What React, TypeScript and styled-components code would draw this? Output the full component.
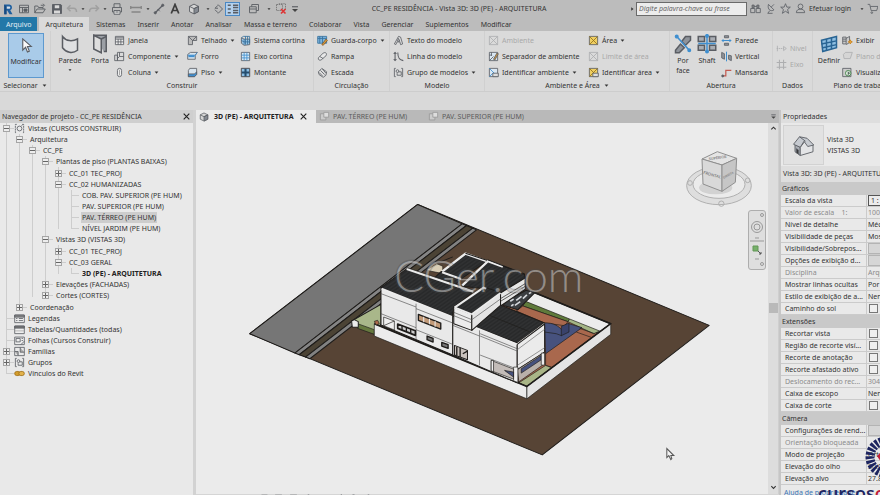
import React from "react";
import styled, { createGlobalStyle, css } from "styled-components";

const GlobalStyle = createGlobalStyle`
  * { box-sizing: border-box; }
  body { margin: 0; background: #d9d9d9; }
  body, button, input, select, table { font-family: "Noto Sans", "Open Sans", sans-serif; font-size: 7px; color: #333; }
  button { border: 0; padding: 0; background: none; cursor: default; }
  ul { list-style: none; margin: 0; padding: 0; }
  svg { display: block; flex: none; }
`;

/* ---------- icons ---------- */

const P = "#5a5d63";
const B = "#3f8fd0";

const icons: Record<string, React.ReactNode> = {
  revit: <><path d="M4 2h6a4 4 0 0 1 1 7.600L14 15h-4l-3-5H6v5H3V2z" fill="#1f5f9f" stroke="none" /><path d="M6 4.500h3.500a1.600 1.600 0 0 1 0 3.200H6z" fill="#d3dde8" stroke="none" /><path d="M3 2l3 2.500V15H3z" fill="#174a80" stroke="none" /></>,
  start: <><path d="M2 3h12v10H2zM2 6h12M6 6v7" /><path d="M8 8h4v3H8z" fill={P} /></>,
  open: <><path d="M1 13V4h4l1 2h6v2" /><path d="M1 13l3-5h11l-3 5z" /><path d="M9 3h4M12 1l2 2-2 2" /></>,
  save: <><path d="M2 2h11l1 1v11H2z" fill={P} /><path d="M5 3h6v4H5zM4 10h8v4H4z" fill="#d8d8d8" stroke="none" /></>,
  undo: <path d="M6 3L2 7l4 4M2 7h8c3 0 4 2 4 5" stroke="#a0a0a0" strokeWidth="2" />,
  redo: <path d="M10 3l4 4-4 4M14 7H6c-3 0-4 2-4 5" stroke="#a0a0a0" strokeWidth="2" />,
  print: <><path d="M4 6V1h8v5M2 6h12v6H2z" /><path d="M4 10h8v5H4z" fill="#ddd" /><path d="M6 12h4" /></>,
  measure: <path d="M1 4v4M15 4v4M1 6h14M2 12h12" stroke="#858585" strokeWidth="1.800" />,
  dim: <><path d="M3 13L13 3" strokeWidth="1.600" /><circle cx="3" cy="13" r="1.500" fill={P} /><circle cx="13" cy="3" r="1.500" fill={P} /><path d="M6 8l3 3" /></>,
  letterA: <path d="M3 14L8 2l5 12M5 10h6" stroke="#3d3d3d" strokeWidth="2.300" />,
  cube: <><path d="M8 1.500l6 3v7l-6 3-6-3v-7z" fill="#d5d5d5" /><path d="M8 7.500v7l6-3v-7z" fill="#858a92" /><path d="M2 4.500l6 3 6-3" /></>,
  section: <><path d="M8 2l6 6-6 6" /><path d="M8 3L4 7h4M8 13L4 9" /></>,
  thin: <path d="M1 3h4M1 8h4M1 13h4M8 3h7M8 6h7M8 10h7M8 13h7" strokeWidth="1.800" />,
  windows: <><path d="M2 5h9v8H2zM5 5V2h9v8h-3" /><path d="M2 8h9" /></>,
  closeHidden: <><path d="M2 2h8v8H2zM5 1h9v8" stroke="#777" strokeDasharray="2 1" /><path d="M8 8l6 6M14 8l-6 6" stroke="#d33" strokeWidth="2.200" /></>,
  more: <><path d="M4 5h8" strokeWidth="1.500" /><path d="M4 8h8l-4 4z" fill="#444" stroke="none" /></>,
  binoc: <><path d="M3 3h3v4H3zM10 3h3v4h-3zM6 5h4" fill="#888" /><path d="M1 8h6v6H1zM9 8h6v6H9z" /></>,
  dish: <path d="M5 2l8 8c-4 3-10 0-8-8zM9 6l4-4M7 11l-3 4h7" />,
  star: <path d="M8 1l2 5h5l-4 3.500 1.500 5.500L8 12l-4.500 3L5 9.500 1 6h5z" />,
  user: <><circle cx="8" cy="5" r="3.500" /><path d="M2 14c0-4 3-5 6-5s6 1 6 5z" /></>,
  cart: <><path d="M1 2h3l2 9h8l2-6H5" /><circle cx="7" cy="14" r="1.200" /></>,
  arrow: <path d="M4 1v12l3-3 2 5 2-1-2-5h4z" fill="#fafafa" />,
  wall: <path d="M2 2c3 4 8 4 12 2v9c-4 3-9 2-12-2z" fill="#dfe0e2" />,
  door: <><path d="M3 1h10v13h-2" fill="#9b9fa5" /><path d="M3 1l6 3v11l-6-3z" fill="#dedede" /><path d="M9 4l4-2" /></>,
  window: <><path d="M2 2h12v12H2z" fill="#eee" /><path d="M2 4h12M2 6h12M6 6v8M10 6v8M2 10h12" /></>,
  component: <><path d="M1 6h4v8H1zM5 2h9v12H5z" /><path d="M8 2v6h6M8 8L5 11" /></>,
  column: <><rect x="5" y="2" width="6" height="12" rx="3" fill="#eee" /><path d="M8 4v8" stroke="#999" /></>,
  roof: <><path d="M2 2h12v6H8v6H2z" fill="#bbb" /><path d="M2 2l6 6M8 8l6-6" /></>,
  ceiling: <><path d="M1 5l4-3h10l-3 4v6H1z" fill="#d8e4ee" /><path d="M1 6h11l3-4" stroke={B} /><path d="M2 6h9v3H2z" fill={B} stroke="none" /></>,
  floor: <><path d="M4 2h10v8l-3 4H2V5z" fill="#d8e4ee" /><path d="M2 10h9l3-3v4l-3 3H2z" fill={B} /></>,
  curtain: <><path d="M2 4l4 2h8v8l-8 1-4-3z" fill="#9cc6e6" /><path d="M5 2h9v10M2 4l3-2M8 2v12M11 2v12M2 8l4 2h8M6 6v8" stroke="#37719d" /></>,
  grid: <><path d="M2 2h12v12H2z" fill="#d8e9f5" /><path d="M6 2v12M10 2v12M2 6h12M2 10h12" stroke={B} /></>,
  mullion: <><path d="M2 2h12v12H2z" fill="#8cbfe4" /><path d="M8 2v12M2 8h12" stroke="#244d6e" strokeWidth="3" /><path d="M2 2h12v12H2z" /></>,
  rail: <><path d="M1 2h13v10H1z" fill="#7db4dd" stroke="#37719d" /><path d="M1 5h13M4 2v10M8 2v10" stroke="#37719d" /><path d="M7 14l6-8 2 2-6 7z" fill="#d99a3c" stroke="#8a5a20" /></>,
  ramp: <path d="M2 10l7-7c4-2 6 1 4 4l-7 6c-2 1-5 0-4-3zM4 8l5 3" fill="#e8e8e8" />,
  stair: <><path d="M2 7l5-5 7 5-1 5-4 3-6-4z" fill="#ddd" /><path d="M5 5l6 6M8 3l5 6M3 8l5 5" /></>,
  textA: <path d="M2 13L8 2l3 1 3 10-3 1-1-4H6l-2 4zM8 5L6.500 9H10z" fill="#ddd" />,
  line: <path d="M3 2v12M7 2c0 8 2 11 8 12M1 4l2-2 2 2M1 12l2 2 2-2" strokeWidth="1.500" />,
  group: <><path d="M4 2H2v12h2M12 2h2v12h-2" /><circle cx="6.500" cy="6" r="2" /><path d="M8 7h4v5H6V9" /></>,
  room: <path d="M2 2h12v12H2zM2 2l12 12M2 14L14 2" />,
  roomSep: <><path d="M2 2h12v12H2z" fill="#d9e7f3" /><path d="M2 14L8 8M2 6h4M5 2v5" /><path d="M8 12l5-9 2 1-5 9z" fill="#d99a3c" /></>,
  roomTag: <><path d="M2 2h12v12H2z" fill="#d9e7f3" /><path d="M2 2l12 12M2 14l6-6" stroke={B} /><path d="M7 9h8v5H7z" fill="#ddd" /></>,
  area: <><path d="M2 2h12v12H2z" fill="#f0cf62" /><path d="M2 2l12 12M2 14L14 2" stroke="#8f701c" /></>,
  areaTag: <><path d="M2 2h12v12H2z" fill="#f0cf62" /><path d="M2 2l12 12M2 14L14 2" stroke="#8f701c" /><path d="M7 9h8v5H7z" fill="#ddd" /></>,
  byFace: <><path d="M2 13l4-5 3 3-4 4H2zM10 2h4v3l-4 4-3-3z" fill="#8f949b" /><path d="M3 2l10 11" stroke={B} strokeWidth="1.300" /><circle cx="3" cy="2" r="1" fill={B} stroke={B} /><circle cx="13" cy="13" r="1" fill={B} stroke={B} /></>,
  shaft: <><path d="M1 2h5v4H1zM10 2h5v4h-5zM1 9h5v4H1zM10 9h5v4h-5z" fill="#a9adb3" /><path d="M8 1v14M1 7.500h14" stroke={B} /><circle cx="8" cy="1.500" r="1" fill={B} stroke={B} /><circle cx="8" cy="14" r="1" fill={B} stroke={B} /></>,
  opWall: <><path d="M5 1h6v3H5zM5 12h6v3H5z" fill="#8f949b" /><path d="M1 8h14M3 6v4M13 6v4" stroke={B} strokeWidth="1.500" /></>,
  opVert: <><path d="M1 2l4 2v8l-4-2zM11 6l4 1v7l-4-2z" fill="#8f949b" /><path d="M8 1v14" stroke={B} strokeWidth="1.500" /></>,
  dormer: <><path d="M2 13h5V5h8" stroke="#c25a50" strokeWidth="1.800" /><circle cx="2.500" cy="13" r="1.500" fill={P} /></>,
  level: <><path d="M1 8h10" strokeDasharray="2 1" /><path d="M11 5l4 3-4 3zM2 4v8" /></>,
  axis: <path d="M1 5h14M1 12h14M5 1v14M11 1v14" strokeWidth="1.500" />,
  setPlane: <><path d="M2 5l12-3v9L3 14z" fill="#8fbfe2" stroke="#2a6594" /><path d="M6 4v9.200M10 3v9.200M2 8l12-2.500M3 11l11-2.500" stroke="#2a6594" /></>,
  show: <><path d="M1 3h5v10H1zM6 5l5-3v9l-5 3M1 6h5M1 9h5" fill="#ccc" /><path d="M12 7l1 2 2 1-2 1-1 2-1-2-2-1 2-1z" fill="#e9a83c" stroke="#c77f18" /></>,
  refPlane: <path d="M2 5l3-3h10l-3 9H3z" fill="#ccc" />,
  viewer: <><path d="M1 2h12v12H1z" fill="#ccc" /><circle cx="9" cy="9" r="4" fill="#dfeee0" stroke="#3b7c42" /><path d="M9 7l2 2-2 2z" fill="#3b7c42" /></>,
  views: <><path d="M4 2H2v12h2M12 2h2v12h-2" strokeDasharray="3 1" /><circle cx="8" cy="8" r="3.500" /><path d="M11 4l2-2" /></>,
  legend: <><path d="M1 3h14v11H1z" fill="#eee" /><path d="M1 3h14v3H1z" fill="#888" /><path d="M3 8h2M3 11h2M7 8h6M7 11h6" /></>,
  schedule: <><path d="M1 3h14v11H1z" fill="#eee" /><path d="M1 3h14v3H1z" fill="#777" /><path d="M1 10h14" stroke="#aaa" /></>,
  sheet: <><path d="M1 3h14v11H1z" fill="#eee" /><path d="M3 5h6v5H3zM11 5h2M11 8h2M10 14l5-5" /></>,
  family: <><path d="M1 2h14v12H1z" /><path d="M1 8h5v6M9 2v7h6" fill="#aaa" /></>,
  link: <><rect x="1" y="5" width="8" height="6" rx="3" fill="#d39c2c" stroke="#a06f12" /><rect x="7" y="5" width="8" height="6" rx="3" fill="#e2b24c" stroke="#a06f12" /></>,
  plan: <><path d="M2 4h8v9H2z" fill="#ccc" stroke="#999" /><path d="M7 2h7v7H7z" fill="#ddd" stroke="#999" /></>,
  house: <g strokeWidth="0.600"><path d="M2 7.500l3.500 2V15L2 12.500z" fill="#a9adb4" /><path d="M5.500 9.500L9 5l5 3v4.500L5.500 15z" fill="#e3e4e6" /><path d="M1 7.500L5 2.500l5 1 4.500 4.500-4 1L8 5.500l-2.500 4z" fill="#c6cad0" /><path d="M5 2.500l4 3" /><path d="M3 10.500l1.200.8v2.700L3 13.200z" fill="#333" /></g>,
  close: <path d="M3 3l10 10M13 3L3 13" stroke="#222" strokeWidth="2" />,
  chevUp: <path d="M3 10l5-5 5 5" stroke="#333" strokeWidth="2.500" />,
  chevDown: <path d="M3 5l5 5 5-5" stroke="#333" strokeWidth="2.500" />,
  right: <path d="M5 1l9 7-9 7z" fill="#333" stroke="none" />,
  down: <path d="M2 5h12l-6 7z" fill="#333" stroke="none" />,
};

const Icon = ({ n, s = 11 }: { n: string; s?: number }) => (
  <svg width={s} height={s} viewBox="0 0 16 16" fill="none" stroke={P} strokeWidth="1.200" aria-hidden="true">
    {icons[n]}
  </svg>
);

/* ---------- frame ---------- */

const Page = styled.div`
  position: relative;
  display: flex;
  flex-direction: column;
  height: 100vh;
  overflow: hidden;
  line-height: 11px;
  white-space: nowrap;
`;

const TitleBar = styled.header`
  display: grid;
  grid-template-columns: 293px 1fr 250px;
  align-items: center;
  height: 17px;
  background: #bcbcbc;
`;

const QuickTools = styled.div`
  display: flex;
  align-items: center;
`;

const QuickButton = styled.button<{ $w: number; $on?: boolean }>`
  display: flex;
  align-items: center;
  justify-content: center;
  flex: none;
  width: ${(p) => p.$w}px;
  height: 14px;
  ${(p) => p.$on && css`background: #b3d0ec; box-shadow: inset 0 0 0 1px #4a88c4;`}
`;

const WindowTitle = styled.h1`
  margin: 0;
  padding-right: 5px;
  font-size: 7px;
  font-weight: 400;
  line-height: 13px;
  text-align: center;
`;

const Account = styled.div`
  display: flex;
  align-items: center;
  overflow: hidden;
`;

const Search = styled.input`
  width: 115px;
  height: 14px;
  margin: 0 1px 0 2px;
  padding: 0 2px;
  border: 1px solid #6a6a6a;
  border-radius: 0;
  background: #ececec;
  font-style: italic;
  &::placeholder { color: #666; opacity: 1; }
`;

const Login = styled.button`
  width: 53px;
  text-align: left;
`;

const Tabs = styled.nav`
  display: flex;
  align-items: stretch;
  height: 14px;
  background: #bcbcbc;
`;

const Tab = styled.button<{ $kind?: "file" | "active" }>`
  padding: 0 6px;
  line-height: 13px;
  ${(p) => p.$kind === "file" && css`margin-right: 2px; background: #2378a8; color: #e4eef4;`}
  ${(p) => p.$kind === "active" && css`margin-right: 1px; background: #dadada;`}
`;

/* ---------- ribbon ---------- */

const RibbonBar = styled.section`
  display: flex;
  height: 61px;
  flex: none;
  background: #dadada;
  border-bottom: 1px solid #cdcdcd;
  overflow: hidden;
`;

const Group = styled.div<{ $w: number }>`
  display: flex;
  flex-direction: column;
  flex: none;
  width: ${(p) => p.$w}px;
  border-right: 1px solid #d0d0d0;
`;

const GroupBody = styled.div`
  display: flex;
  height: 49px;
  padding: 2px 0 0 3px;
`;

const Caption = styled.div`
  display: flex;
  align-items: center;
  justify-content: center;
  gap: 4px;
`;

const Stack = styled.div<{ $w: number; $low?: boolean }>`
  display: flex;
  flex-direction: column;
  flex: none;
  width: ${(p) => p.$w}px;
  padding-top: ${(p) => (p.$low ? 7 : 0)}px;
`;

const Tool = styled.button<{ $off?: boolean }>`
  display: flex;
  align-items: center;
  gap: 3px;
  height: 16px;
  ${(p) => p.$off && css`color: #a9a9a9; svg { opacity: 0.35; }`}
`;

const BigTool = styled.button<{ $w: number; $on?: boolean }>`
  display: flex;
  flex-direction: column;
  align-items: center;
  gap: 2px;
  flex: none;
  width: ${(p) => p.$w}px;
  height: 45px;
  padding-top: 1px;
  line-height: 10px;
  ${(p) => p.$on && css`margin-left: 5px; padding-top: 5px; gap: 4px; background: #a9cbe9; box-shadow: inset 0 0 0 1px #5d99cf;`}
`;

type Item = [icon: string, label: string, menu?: boolean, off?: boolean];

const ToolStack = ({ w, items, low }: { w: number; items: Item[]; low?: boolean }) => (
  <Stack $w={w} $low={low}>
    {items.map(([icon, label, menu, off]) => (
      <Tool key={label} $off={off} disabled={off}>
        <Icon n={icon} />
        {label}
        {menu && <Icon n="down" s={5} />}
      </Tool>
    ))}
  </Stack>
);

const Ribbon = () => (
  <RibbonBar aria-label="Arquitetura">
    <Group $w={51}>
      <GroupBody>
        <BigTool $w={36} $on><Icon n="arrow" s={15} />Modificar</BigTool>
      </GroupBody>
      <Caption>Selecionar <Icon n="down" s={5} /></Caption>
    </Group>
    <Group $w={263}>
      <GroupBody>
        <BigTool $w={32}><Icon n="wall" s={20} />Parede<Icon n="down" s={4} /></BigTool>
        <BigTool $w={28}><Icon n="door" s={20} />Porta</BigTool>
        <ToolStack w={73} items={[["window", "Janela"], ["component", "Componente", true], ["column", "Coluna", true]]} />
        <ToolStack w={53} items={[["roof", "Telhado", true], ["ceiling", "Forro"], ["floor", "Piso", true]]} />
        <ToolStack w={70} items={[["curtain", "Sistema cortina"], ["grid", "Eixo cortina"], ["mullion", "Montante"]]} />
      </GroupBody>
      <Caption>Construir</Caption>
    </Group>
    <Group $w={76}>
      <GroupBody>
        <ToolStack w={70} items={[["rail", "Guarda-corpo", true], ["ramp", "Rampa"], ["stair", "Escada"]]} />
      </GroupBody>
      <Caption>Circulação</Caption>
    </Group>
    <Group $w={95}>
      <GroupBody>
        <ToolStack w={90} items={[["textA", "Texto do modelo"], ["line", "Linha do modelo"], ["group", "Grupo de modelos", true]]} />
      </GroupBody>
      <Caption>Modelo</Caption>
    </Group>
    <Group $w={185}>
      <GroupBody>
        <ToolStack w={100} items={[["room", "Ambiente", false, true], ["roomSep", "Separador de ambiente"], ["roomTag", "Identificar ambiente", true]]} />
        <ToolStack w={80} items={[["area", "Área", true], ["room", "Limite de área", false, true], ["areaTag", "Identificar área", true]]} />
      </GroupBody>
      <Caption>Ambiente e Área <Icon n="down" s={5} /></Caption>
    </Group>
    <Group $w={103}>
      <GroupBody>
        <BigTool $w={20}><Icon n="byFace" s={20} />Por<br />face</BigTool>
        <BigTool $w={28}><Icon n="shaft" s={20} />Shaft</BigTool>
        <ToolStack w={50} items={[["opWall", "Parede"], ["opVert", "Vertical"], ["dormer", "Mansarda"]]} />
      </GroupBody>
      <Caption>Abertura</Caption>
    </Group>
    <Group $w={40}>
      <GroupBody>
        <ToolStack w={36} low items={[["level", "Nível", false, true], ["axis", "Eixo", false, true]]} />
      </GroupBody>
      <Caption>Dados</Caption>
    </Group>
    <Group $w={100}>
      <GroupBody>
        <BigTool $w={26}><Icon n="setPlane" s={20} />Definir</BigTool>
        <ToolStack w={70} items={[["show", "Exibir"], ["refPlane", "Plano de referência", false, true], ["viewer", "Visualizador"]]} />
      </GroupBody>
      <Caption>Plano de trabalho</Caption>
    </Group>
  </RibbonBar>
);

/* ---------- project browser ---------- */

const OptionsBar = styled.div`
  flex: none;
  height: 18px;
  background: #d9d9d9;
`;

const Workspace = styled.main`
  display: grid;
  grid-template-columns: 196px minmax(0, 1fr) 101px;
  flex: 1;
  min-height: 0;
`;

const Browser = styled.aside`
  background: #e9e9e9;
  border-right: 3px solid #d2d2d2;
  overflow: hidden;
`;

const PanelHeader = styled.div`
  display: flex;
  align-items: center;
  justify-content: space-between;
  height: 13px;
  padding: 0 1px 0 2px;
  background: #cfcfcf;
`;

const IconButton = styled.button`
  display: flex;
  padding: 1px;
`;

const Branch = styled.ul`
  background: linear-gradient(#cdcdcd, #cdcdcd) 6px 0 / 1px calc(100% - 5px) no-repeat;
  & & { margin-left: 13px; }
  & & & & { padding-bottom: 1px; }
  & & & & & { padding: 1px 0 0; }
  & & & & & & { padding: 0; }
`;

const Row = styled.div`
  display: flex;
  align-items: center;
  height: 11px;
  padding-left: 3px;
`;

const Expander = styled.button`
  display: grid;
  place-items: center;
  flex: none;
  width: 7px;
  height: 7px;
  border: 1px solid #a5a5a5;
  background: #ededed;
`;

const Dash = styled.span<{ $w: number }>`
  flex: none;
  width: ${(p) => p.$w}px;
  height: 1px;
  background: #cdcdcd;
`;

const LeafLine = styled(Dash)`
  margin-left: 3px;
`;

const NodeName = styled.span<{ $selected?: boolean; $bold?: boolean }>`
  padding: 0 1px;
  margin-left: 2px;
  ${(p) => p.$selected && css`background: #cdcdcd;`}
  ${(p) => p.$bold && css`font-weight: 700; color: #222;`}
`;

type Node = { t: string; icon?: string; kids?: Node[]; closed?: boolean; sel?: boolean; bold?: boolean };

const tree: Node[] = [
  {
    t: "Vistas (CURSOS CONSTRUIR)", icon: "views", kids: [
      {
        t: "Arquitetura", kids: [
          {
            t: "CC_PE", kids: [
              {
                t: "Plantas de piso (PLANTAS BAIXAS)", kids: [
                  { t: "CC_01 TEC_PROJ", closed: true },
                  {
                    t: "CC_02 HUMANIZADAS", kids: [
                      { t: "COB. PAV. SUPERIOR (PE HUM)" },
                      { t: "PAV. SUPERIOR (PE HUM)" },
                      { t: "PAV. TÉRREO (PE HUM)", sel: true },
                      { t: "NÍVEL JARDIM (PE HUM)" },
                    ],
                  },
                ],
              },
              {
                t: "Vistas 3D (VISTAS 3D)", kids: [
                  { t: "CC_01 TEC_PROJ", closed: true },
                  { t: "CC_03 GERAL", kids: [{ t: "3D (PE) - ARQUITETURA", bold: true }] },
                ],
              },
              { t: "Elevações (FACHADAS)", closed: true },
              { t: "Cortes (CORTES)", closed: true },
            ],
          },
        ],
      },
      { t: "Coordenação", closed: true },
    ],
  },
  { t: "Legendas", icon: "legend" },
  { t: "Tabelas/Quantidades (todas)", icon: "schedule" },
  { t: "Folhas (Cursos Construir)", icon: "sheet" },
  { t: "Famílias", icon: "family", closed: true },
  { t: "Grupos", icon: "group", closed: true },
  { t: "Vínculos do Revit", icon: "link" },
];

const TreeList = ({ nodes }: { nodes: Node[] }) => (
  <Branch>
    {nodes.map((n) => (
      <li key={n.t}>
        <Row>
          {n.kids || n.closed ? (
            <Expander aria-label={(n.closed ? "Expandir " : "Recolher ") + n.t}>
              <svg width="5" height="5" viewBox="0 0 5 5" stroke="#666">
                <path d={n.closed ? "M0 2.500h5M2.500 0v5" : "M0 2.500h5"} />
              </svg>
            </Expander>
          ) : (
            <LeafLine $w={4} />
          )}
          <Dash $w={4} />
          {n.icon && <Icon n={n.icon} s={11} />}
          <NodeName $selected={n.sel} $bold={n.bold}>{n.t}</NodeName>
        </Row>
        {n.kids && <TreeList nodes={n.kids} />}
      </li>
    ))}
  </Branch>
);

/* ---------- drawing area ---------- */

const ViewArea = styled.section`
  display: flex;
  flex-direction: column;
  min-width: 0;
`;

const ViewTabs = styled.div`
  display: flex;
  height: 13px;
  flex: none;
  background: #b9b9b9;
`;

const ViewTab = styled.button<{ $on?: boolean }>`
  display: flex;
  align-items: center;
  gap: 3px;
  width: ${(p) => (p.$on ? 120 : 109)}px;
  padding: 0 3px;
  color: #5c5c5c;
  ${(p) => p.$on && css`gap: 5px; background: #ebebeb; color: #222; font-weight: 700;`}
`;

const TabMenu = styled(IconButton)`
  margin-left: auto;
  align-self: center;
`;

const ViewRow = styled.div`
  display: flex;
  flex: 1;
  min-height: 0;
`;

const Canvas = styled.div`
  position: relative;
  flex: 1;
  min-width: 0;
  overflow: hidden;
  background: #ebebeb;
`;

const SceneSvg = styled.svg`
  width: 100%;
  height: 100%;
`;

const CubeOverlay = styled.div`
  position: absolute;
  top: 26px;
  right: 13px;
`;

const NavBar = styled.div`
  position: absolute;
  top: 87px;
  right: 2px;
  display: flex;
  flex-direction: column;
  align-items: center;
  justify-content: space-between;
  width: 18px;
  height: 60px;
  padding: 2px 0;
  border: 1px solid #adadad;
  border-radius: 3px;
  background: #dedede;
`;

const Scrollbar = styled.div`
  display: flex;
  flex-direction: column;
  align-items: center;
  justify-content: space-between;
  width: 11px;
  padding: 2px 0 3px;
  background: #dddddd;
  border-right: 1px solid #cfcfcf;
`;

const Thumb = styled.div`
  width: 9px;
  height: 10px;
  background: #b9b9b9;
`;

const ViewControls = styled.div`
  display: flex;
  align-items: flex-start;
  gap: 6px;
  flex: none;
  height: 2px;
  padding-left: 48px;
  overflow: hidden;
  background: #d5d5d5;
`;

const Scene = () => (
  <SceneSvg viewBox="197 123 571 370" role="img" aria-label="Vista 3D da residência">
    <defs>
      <pattern id="tiles" width="9" height="9" patternUnits="userSpaceOnUse" patternTransform="rotate(-35)">
        <rect width="9" height="9" fill="#292a2b" />
        <path d="M0 4.500h9" stroke="#383939" strokeWidth="2" />
      </pattern>
    </defs>
    <g transform="translate(240 190) scale(0.33333)" stroke="#1e1c1a" strokeWidth="3" strokeLinejoin="round">
      <path d="M535 43L1408 405L908 793L32 430z" fill="#574435" />
      <path d="M535 43L668 101L167 488L32 430z" fill="#767676" />
      <path d="M668 101L681 106L180 493L167 488z" fill="#858585" />
      <path d="M681 106L700 114L199 500L180 493z" fill="#4b4335" />
      <path d="M700 114L711 119L212 505L199 500z" fill="#828282" />

      <path d="M425 342L337 392L405 430L425 400z" fill="#a9b78a" />
      <path d="M355 400L405 418V432L355 414z" fill="#66793f" strokeWidth="2" />
      <path d="M337 392L345 388L357 394V411L339 410z" fill="#ececec" />
      <path d="M560 240L592 220L610 228V250z" fill="#d9cdb5" strokeWidth="2" />
      <path d="M592 220L640 200" fill="none" />

      <path d="M880 305L1113 400L862 588L700 500L750 340z" fill="#a9684d" />
      <path d="M880 305L1113 400L1075 428L850 332z" fill="#ececec" />
      <path d="M858 333L990 386L985 394L850 347z" fill="#5f7a3b" strokeWidth="2" />
      <path d="M990 386L1080 422L1062 430L985 394z" fill="#a4b585" strokeWidth="2" />
      <path d="M850 347L985 394L975 406L915 398L830 362z" fill="#a9684d" strokeWidth="2" />
      <path d="M915 398C940 396 958 408 966 418L988 400L1027 412L918 490z" fill="#47527e" strokeWidth="2" />
      <path d="M965 408V436L988 425V398z" fill="#39426b" strokeWidth="2" />
      <path d="M915 425L950 430L966 436" fill="none" strokeWidth="2" />
      <path d="M1010 425L1055 441M1020 414L1065 430" fill="none" strokeWidth="2" />
      <path d="M918 490L918 525L936 530" fill="none" strokeWidth="2" />
      <path d="M918 525L936 532L862 588L838 577z" fill="#a9b587" strokeWidth="2" />

      <path d="M405 400L862 588V625L405 437z" fill="#ececec" strokeWidth="2" />
      <path d="M862 588L1113 400V432L862 625z" fill="#e4e4e4" strokeWidth="2" />
      <path d="M405 400L862 588L1113 400L880 305" fill="none" strokeWidth="5" />

      <path d="M803 330L860 300L885 308L835 358L790 345z" fill="#3a3d40" />
      <path d="M812 333L822 326M830 330L846 318M826 345L842 334M850 325L862 314M815 347L822 342M868 310L875 306" stroke="#d5d8dc" strokeWidth="5" />

      <path d="M678 190L742 213L665 266L608 244z" fill="url(#tiles)" />
      <path d="M608 244L678 190L742 213" fill="none" stroke="#ececec" strokeWidth="7" />
      <path d="M678 189L744 211" fill="none" />
      <path d="M605 244L665 264L640 292L580 268z" fill="url(#tiles)" />
      <path d="M608 246L665 266" fill="none" stroke="#ececec" strokeWidth="6" />
      <path d="M783 305L857 260V297L783 347z" fill="#e6e6e6" />
      <path d="M783 325L857 280M783 333L857 288" strokeWidth="2" />
      <path d="M745 210L855 252V264L783 308L730 295L668 288z" fill="url(#tiles)" />
      <path d="M668 286L745 213L790 229" fill="none" stroke="#ececec" strokeWidth="7" />
      <path d="M745 209L855 251" fill="none" />

      <path d="M425 292L640 377V494L425 404z" fill="#e9e9e9" />
      <path d="M502 236L702 304L645 350L638 377L425 292z" fill="url(#tiles)" />
      <path d="M502 236L702 304" fill="none" stroke="#ececec" strokeWidth="7" />
      <path d="M502 232L704 300" fill="none" strokeWidth="2" />
      <path d="M427 295L638 379" fill="none" stroke="#ececec" strokeWidth="5" />
      <path d="M425 310L530 350M530 355L640 398M425 370L530 412M530 418L640 462M530 340V447" fill="none" stroke="#555" strokeWidth="2" />

      <path d="M640 378L833 458V577L640 494z" fill="#e9e9e9" />
      <path d="M780 343L915 398L833 458L700 406z" fill="url(#tiles)" />
      <path d="M700 409L833 462L915 401" fill="none" stroke="#ececec" strokeWidth="6" />
      <path d="M745 373L870 424" fill="none" strokeWidth="2" />
      <path d="M833 462L915 401V485L833 538z" fill="#ebebeb" />
      <path d="M833 478L915 417M833 525L915 472" fill="none" stroke="#666" strokeWidth="2" />
      <path d="M833 538L915 485V520L838 574z" fill="#b9b1ab" strokeWidth="2" />
      <path d="M845 535L905 495V508L845 548z" fill="#47527e" strokeWidth="2" />
      <path d="M905 488H915V524H905z" fill="#ececec" strokeWidth="2" />
      <path d="M822 530H835V576L822 571z" fill="#f0f0f0" strokeWidth="2" />
      <path d="M640 405L720 437M720 420V525M722 430L833 475M722 494L822 532M722 437L833 482" fill="none" stroke="#555" strokeWidth="2" />
      <path d="M755 510L822 536V566L755 541z" fill="#c3bcb8" strokeWidth="2" />
      <path d="M755 510H762V544L755 541z" fill="#eee" strokeWidth="2" />
      <path d="M795 540L822 545V560z" fill="#47527e" strokeWidth="2" />

      <path d="M643 350L697 372V420L643 400z" fill="#ececec" />
      <path d="M697 372L783 308V345L697 420z" fill="#e4e4e4" />
      <path d="M643 350L732 290L783 306L697 372z" fill="url(#tiles)" />
      <path d="M645 352L732 292L740 295M697 372L783 308M645 351L697 372" fill="none" stroke="#ececec" strokeWidth="6" />
      <path d="M643 366L697 388L783 326M643 376L697 398" fill="none" stroke="#555" strokeWidth="2" />

      <path d="M537 372L604 398V416L537 390z" fill="#c29a78" strokeWidth="4" />
      <path d="M553 379V396M570 385V402M587 392V409" stroke="#eee" />
      <path d="M475 401L528 421V435L475 414z" fill="#ccc" strokeWidth="5" />
      <path d="M488 406V420M501 411V425M514 416V430" strokeWidth="4" />
      <path d="M433 380L465 392V419L433 406zM433 406L465 392" fill="#efefef" strokeWidth="2" />
      <path d="M563 437L581 444V455L563 448zM607 456L626 463V474L607 467z" fill="#777" strokeWidth="4" />
      <path d="M645 465L684 480V508L645 494z" fill="#c9c2bd" strokeWidth="3" />
      <path d="M652 469V495M662 472V500M670 490L684 482" strokeWidth="4" />
      <path d="M405 393L415 390L420 400L410 404z" fill="#ad6b4d" strokeWidth="2" />
    </g>
    <text x="395" y="292" fontFamily="Lato" fontWeight="300" fontSize="44" fill="#e8e8e8" fillOpacity="0.45" stroke="#4a4a4a" strokeOpacity="0.3" strokeWidth="3" paintOrder="stroke">CGer.com</text>
    <path d="M667 448v9l2-2 2 4 1-1-1-3h3z" fill="#f4f4f4" stroke="#555" />
  </SceneSvg>
);

const ViewCube = () => (
  <svg width="70" height="58" viewBox="20 130 210 174" fill="none" stroke="#b0b0b0" strokeWidth="3" role="img" aria-label="ViewCube">
    <ellipse cx="122" cy="240" rx="97" ry="57" fill="#dedede" />
    <ellipse cx="122" cy="236" rx="78" ry="42" fill="#ebebeb" />
    <ellipse cx="112" cy="246" rx="50" ry="20" fill="#d2d2d2" stroke="none" />
    <circle cx="35" cy="232" r="7" /><circle cx="208" cy="224" r="7" /><circle cx="129" cy="294" r="8" />
    <g stroke="#8f8f8f">
      <path d="M117 138L175 158L131 178L71 160z" fill="#e4e4e4" />
      <path d="M71 160L131 178V257L74 235z" fill="#d9d9d9" />
      <path d="M131 178L175 158L171 230L131 257z" fill="#c6c6c6" />
    </g>
    <g fill="#808080" stroke="none" fontFamily="Lato" fontWeight="700">
      <text x="74" y="204" fontSize="12" transform="rotate(16 74 204)">FRONTAL</text>
      <text x="92" y="164" fontSize="11" transform="rotate(-8 92 164)">SUPERIOR</text>
      <text x="136" y="219" fontSize="9" transform="rotate(-28 136 219)">DIREITA</text>
    </g>
  </svg>
);

/* ---------- properties ---------- */

const Properties = styled.aside`
  overflow: hidden;
  background: #e9e9e9;
  border-left: 2px solid #c6c6c6;
`;

const PropsTitle = styled(PanelHeader)`
  background: #dedede;
`;

const TypeBox = styled.div`
  display: flex;
  align-items: center;
  gap: 3px;
  height: 43px;
  padding: 1px 0 1px 2px;
`;

const Preview = styled.div`
  display: grid;
  place-items: center;
  width: 41px;
  height: 40px;
  border: 1px solid #d2d2d2;
  background: #e2e2e2;
`;

const Instance = styled.div`
  height: 16px;
  padding: 0 2px;
  line-height: 16px;
  background: #dedede;
`;

const PropTable = styled.table`
  width: 160px;
  table-layout: fixed;
  border-collapse: separate;
  border-spacing: 0;
  th, td { font-weight: 400; text-align: left; padding: 0; overflow: hidden; }
`;

const Section = styled.th`
  height: 13px;
  background: #c9c9c9;
  line-height: 12px;
  && { padding-left: 1px; }
`;

const PropName = styled.th<{ $off?: boolean }>`
  height: 12px;
  border-bottom: 1px solid #cbcbcb;
  border-right: 1px solid #cbcbcb;
  white-space: pre;
  && { padding-left: 4px; }
  color: ${(p) => (p.$off ? "#8b8b8b" : "#333")};
`;

const PropValue = styled.td<{ $off?: boolean }>`
  height: 12px;
  border-bottom: 1px solid #cbcbcb;
  && { padding-left: 1px; }
  color: ${(p) => (p.$off ? "#8b8b8b" : "#333")};
`;

const Check = styled.input`
  appearance: none;
  display: block;
  width: 9px;
  height: 9px;
  margin: 1px;
  border: 1px solid #777;
  background: #efefef;
`;

const Scale = styled.input`
  display: block;
  width: 70px;
  height: 11px;
  padding: 0 2px;
  border: 1px solid #555;
  background: #ececec;
`;

const EditButton = styled.button`
  display: block;
  width: 70px;
  height: 11px;
  border: 1px solid #b4b4b4;
  background: #d6d6d6;
`;

const HelpLink = styled.a`
  display: block;
  padding: 2px 3px;
  color: #3c74b4;
`;

type Prop = [name: string, value?: string, off?: boolean];
const sections: [string, Prop[]][] = [
  ["Gráficos", [
    ["Escala da vista", "scale"], ["Valor de escala    1:", "100", true], ["Nível de detalhe", "Médio"],
    ["Visibilidade de peças", "Mostrar original"], ["Visibilidade/Sobrepos...", "edit"], ["Opções de exibição d...", "edit"],
    ["Disciplina", "Arquitetura", true], ["Mostrar linhas ocultas", "Por disciplina"], ["Estilo de exibição de a...", "Nenhum"], ["Caminho do sol"],
  ]],
  ["Extensões", [
    ["Recortar vista"], ["Região de recorte visí..."], ["Recorte de anotação"], ["Recorte afastado ativo"],
    ["Deslocamento do rec...", "304.8000", true], ["Caixa de escopo", "Nenhum"], ["Caixa de corte"],
  ]],
  ["Câmera", [
    ["Configurações de rend...", "edit"], ["Orientação bloqueada", " ", true], ["Modo de projeção", "Ortogonal"],
    ["Elevação do olho", "30.0000"], ["Elevação alvo", "27.8500"],
  ]],
];

const Value = ({ name, value }: { name: string; value?: string }) => {
  if (!value) return <Check type="checkbox" aria-label={name} />;
  if (value === "scale") return <Scale aria-label={name} defaultValue="1 : 100" />;
  if (value === "edit") return <EditButton aria-label={name} />;
  return <>{value}</>;
};

/* ---------- brand mark ---------- */

const Brand = styled.div`
  position: absolute;
  right: 0;
  bottom: 0;
  width: 62px;
  height: 62px;
  overflow: hidden;
`;

const BrandMark = () => (
  <Brand>
    <svg width="62" height="62" viewBox="818 433 62 62" role="img" aria-label="Cursos Construir">
      <circle cx="886" cy="457" r="16" fill="none" stroke="#1d2560" strokeWidth="9" strokeDasharray="2.600 1.400" />
      <path d="M877 456l4-4v10z" fill="#c02038" />
      <text x="818" y="500" fontFamily="Open Sans" fontSize="18" fontWeight="600" fill="#1d2560">cursos<tspan fill="#c02038">c</tspan></text>
    </svg>
  </Brand>
);

const quick: [string, number, string][] = [
  ["revit", 16, "Revit"], ["start", 15, "Início"], ["open", 18, "Abrir"], ["save", 15, "Salvar"], ["undo", 15, "Desfazer"], ["down", 7, "Lista desfazer"],
  ["redo", 15, "Refazer"], ["down", 7, "Lista refazer"], ["print", 18, "Imprimir"], ["measure", 19, "Medir"], ["down", 6, "Lista medir"], ["dim", 16, "Cota"],
  ["letterA", 15, "Texto"], ["cube", 24, "Vista 3D"], ["down", 4, "Lista vista"], ["section", 15, "Corte"], ["thin", 15, "Linhas finas"],
  ["windows", 27, "Alternar janelas"], ["down", 4, "Lista janelas"], ["closeHidden", 19, "Fechar inativas"], ["more", 10, "Personalizar"],
];

const tabNames = ["Sistemas", "Inserir", "Anotar", "Analisar", "Massa e terreno", "Colaborar", "Vista", "Gerenciar", "Suplementos", "Modificar"];

export default function App() {
  return (
    <Page>
      <GlobalStyle />
      <TitleBar>
        <QuickTools>
          {quick.map(([icon, w, label]) => (
            <QuickButton key={label} $w={w} $on={icon === "thin"} aria-label={label}>
              <Icon n={icon} s={icon === "down" ? 4 : 12} />
            </QuickButton>
          ))}
        </QuickTools>
        <WindowTitle>CC_PE RESIDÊNCIA - Vista 3D: 3D (PE) - ARQUITETURA</WindowTitle>
        <Account>
          <Icon n="right" s={4} />
          <Search placeholder="Digite palavra-chave ou frase" aria-label="Pesquisar" />
          <QuickButton $w={15} aria-label="Procurar"><Icon n="binoc" /></QuickButton>
          <QuickButton $w={15} aria-label="Comunicação"><Icon n="dish" /></QuickButton>
          <QuickButton $w={15} aria-label="Favoritos"><Icon n="star" /></QuickButton>
          <QuickButton $w={16} aria-label="Usuário"><Icon n="user" /></QuickButton>
          <Login>Efetuar login</Login>
          <Icon n="down" s={4} />
          <QuickButton $w={16} aria-label="Loja"><Icon n="cart" /></QuickButton>
        </Account>
      </TitleBar>
      <Tabs>
        <Tab $kind="file">Arquivo</Tab>
        <Tab $kind="active">Arquitetura</Tab>
        {tabNames.map((t) => <Tab key={t}>{t}</Tab>)}
      </Tabs>
      <Ribbon />
      <OptionsBar />
      <Workspace>
        <Browser>
          <PanelHeader>
            Navegador de projeto - CC_PE RESIDÊNCIA
            <IconButton aria-label="Fechar navegador"><Icon n="close" s={9} /></IconButton>
          </PanelHeader>
          <TreeList nodes={tree} />
        </Browser>
        <ViewArea>
          <ViewTabs>
            <ViewTab $on><Icon n="cube" s={10} />3D (PE) - ARQUITETURA<Icon n="close" s={9} /></ViewTab>
            <ViewTab><Icon n="plan" />PAV. TÉRREO (PE HUM)</ViewTab>
            <ViewTab><Icon n="plan" />PAV. SUPERIOR (PE HUM)</ViewTab>
            <TabMenu aria-label="Lista de vistas"><Icon n="more" s={9} /></TabMenu>
          </ViewTabs>
          <ViewRow>
            <Canvas>
              <Scene />
              <CubeOverlay><ViewCube /></CubeOverlay>
              <NavBar>
                <svg width="14" height="53" viewBox="0 0 14 53" fill="none" stroke="#999" aria-hidden="true">
                  <circle cx="12" cy="2" r="1.500" /><circle cx="7" cy="14" r="5.500" /><circle cx="7" cy="14" r="3" />
                  <path d="M5 25h4M0 28h14M5 46h4" />
                  <path d="M3 33h5v5H3z" fill="#77b06b" stroke="#629757" /><path d="M8 38l3 3M9 41h2v-2" stroke="#555" />
                  <circle cx="12" cy="51" r="1.500" />
                </svg>
              </NavBar>
            </Canvas>
            <Scrollbar>
              <Icon n="chevUp" s={7} />
              <Thumb />
              <Icon n="chevDown" s={7} />
            </Scrollbar>
          </ViewRow>
          <ViewControls>
            {["schedule", "ceiling", "area", "grid", "cube", "section", "dim", "user", "cube"].map((n, i) => <Icon key={i} n={n} s={9} />)}
          </ViewControls>
        </ViewArea>
        <Properties>
          <PropsTitle>Propriedades</PropsTitle>
          <TypeBox>
            <Preview><Icon n="house" s={24} /></Preview>
            <div>Vista 3D<br />VISTAS 3D</div>
          </TypeBox>
          <Instance>Vista 3D: 3D (PE) - ARQUITETURA</Instance>
          <PropTable>
            <colgroup><col width="86" /><col /></colgroup>
            {sections.map(([title, rows]) => (
              <tbody key={title}>
                <tr><Section colSpan={2}>{title}</Section></tr>
                {rows.map(([name, value, off]) => (
                  <tr key={name}>
                    <PropName $off={off} scope="row">{name}</PropName>
                    <PropValue $off={off}><Value name={name} value={value} /></PropValue>
                  </tr>
                ))}
              </tbody>
            ))}
          </PropTable>
          <HelpLink href="#ajuda">Ajuda de propriedades</HelpLink>
        </Properties>
      </Workspace>
      <BrandMark />
    </Page>
  );
}
